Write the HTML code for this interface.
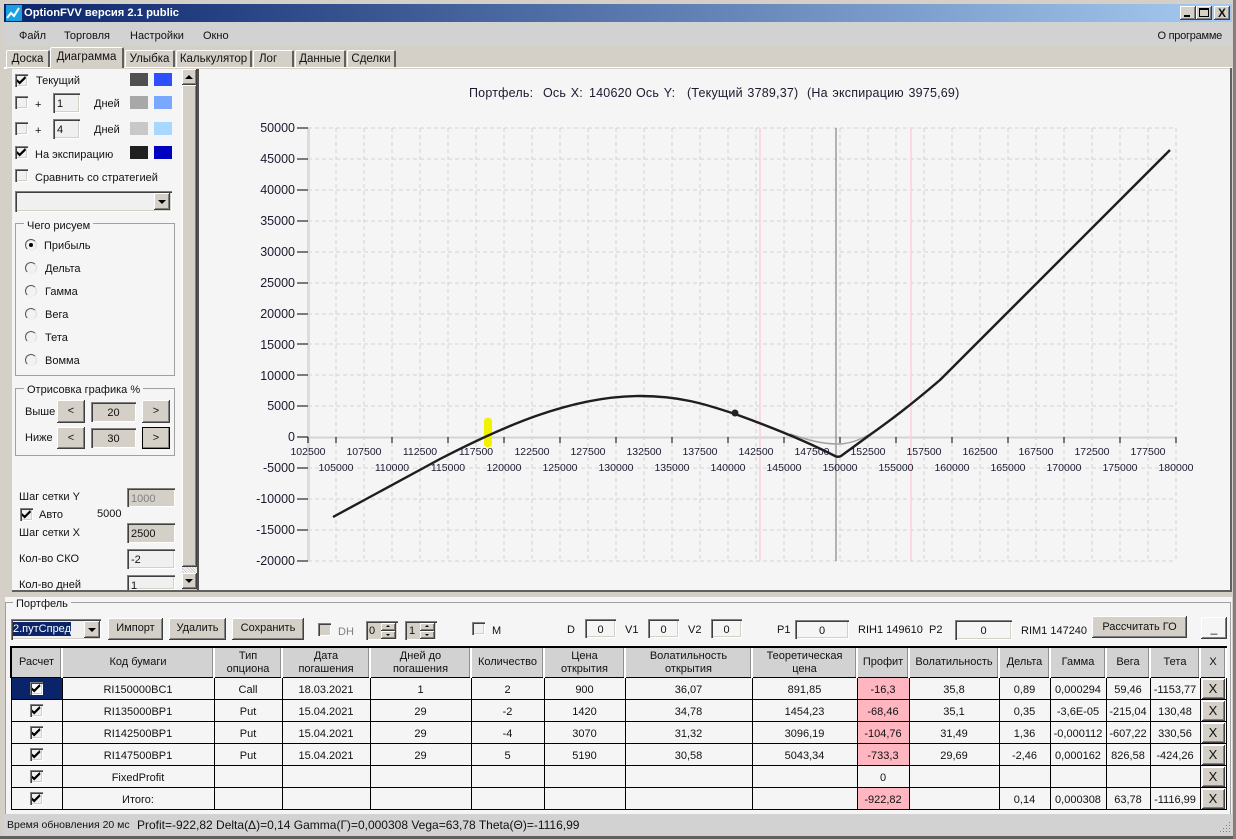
<!DOCTYPE html>
<html><head><meta charset="utf-8"><title>OptionFVV</title>
<style>
html,body{margin:0;padding:0;background:#d4d0c8;}
#w{position:relative;width:1236px;height:839px;overflow:hidden;background:#d4d0c8;font:11px/13px "Liberation Sans",sans-serif;color:#111;}
.a{position:absolute;white-space:nowrap;}
.b{position:absolute;box-sizing:border-box;}
.t{position:absolute;white-space:nowrap;line-height:14px;}
.up{position:absolute;box-sizing:border-box;background:#d4d0c8;box-shadow:inset -1px -1px 0 #404040,inset 1px 1px 0 #fff,inset -2px -2px 0 #808080;text-align:center;}
.in{position:absolute;box-sizing:border-box;background:#f0f0f0;box-shadow:inset 1px 1px 0 #808080,inset 2px 2px 0 #404040,inset -1px -1px 0 #fff,inset -2px -2px 0 #d4d0c8;padding:4px 4px 2px;line-height:14px;overflow:hidden;white-space:nowrap;}
.dis{background:#d4d0c8;}
.cb{position:absolute;box-sizing:border-box;width:13px;height:13px;background:#f0f0f0;box-shadow:inset 1px 1px 0 #808080,inset 2px 2px 0 #404040,inset -1px -1px 0 #fff,inset -2px -2px 0 #d4d0c8;}
.cb.c::after{content:"";position:absolute;left:2px;top:2px;width:9px;height:9px;background:#000;clip-path:polygon(0 35%,30% 60%,90% 0,100% 25%,30% 95%,0 65%);}
.rd{position:absolute;box-sizing:border-box;width:12px;height:12px;border-radius:50%;background:#f2f2f2;border:1px solid;border-color:#555 #ddd #eee #555;}
.rd.c::after{content:"";position:absolute;left:3px;top:3px;width:4px;height:4px;border-radius:50%;background:#000;}
.g{position:absolute;box-sizing:border-box;border:1px solid #a0a0a0;}
.tab{position:absolute;box-sizing:border-box;background:#d4d0c8;border-top:1px solid #fff;border-left:1px solid #fff;border-right:2px solid #606060;border-radius:2px 2px 0 0;text-align:center;line-height:17px;font-size:11.5px;}
.sw{position:absolute;width:18px;height:13px;}
.ar{position:absolute;width:0;height:0;border:4px solid transparent;border-top:4px solid #000;border-bottom:0;}
.aru{position:absolute;width:0;height:0;border:4px solid transparent;border-bottom:4px solid #000;border-top:0;}
table{position:absolute;left:10px;top:648px;width:1215px;border-collapse:collapse;table-layout:fixed;background:#f5f5f5;font:11px/13px "Liberation Sans",sans-serif;}
th{background:#d2d2d2;font-weight:normal;height:29px;padding:0;border-right:2px solid #fff;box-shadow:inset -1px 0 0 #909090;text-align:center;}
td{height:18px;padding:3px 0 0;border:1px solid #000;text-align:center;position:relative;}
.p{background:#ffb6c1;}
td .cb{left:18px;top:4px;}
.x{position:absolute;left:1px;top:1px;width:23px;height:20px;font-size:13px;line-height:19px;}
.ct{position:absolute;white-space:nowrap;top:86px;font-size:12.5px;line-height:14px;letter-spacing:.2px;word-spacing:1px;color:#1a1a30;}
</style></head><body><div id="w">

<!-- title -->
<div class="b" style="left:4px;top:4px;width:1228px;height:18px;background:linear-gradient(90deg,#0a246a,#a6caf0);"></div>
<div class="b" style="left:6px;top:5px;width:16px;height:16px;background:#1aa0e0;"></div>
<svg class="b" style="left:6px;top:5px" width="16" height="16"><path d="M1 13L5 8L8 11L13 3" fill="none" stroke="#fff" stroke-width="2"/></svg>
<div class="t" style="left:24px;top:6px;color:#fff;font:bold 11.2px/14px 'Liberation Sans',sans-serif;">OptionFVV версия 2.1 public</div>
<div class="up" style="left:1180px;top:6px;width:16px;height:14px;"><div class="b" style="left:4px;top:9px;width:6px;height:2px;background:#000"></div></div>
<div class="up" style="left:1196px;top:6px;width:16px;height:14px;"><div class="b" style="left:3px;top:2px;width:10px;height:9px;border:1px solid #000;border-top-width:2px"></div></div>
<div class="up" style="left:1214px;top:6px;width:16px;height:14px;font:bold 12px/14px 'Liberation Sans',sans-serif;">X</div>

<!-- menu -->
<div class="b" style="left:4px;top:22px;width:1228px;height:24px;background:#d2d2d2;"></div>
<div class="t" style="left:19px;top:29px">Файл</div>
<div class="t" style="left:64px;top:29px">Торговля</div>
<div class="t" style="left:130px;top:29px">Настройки</div>
<div class="t" style="left:203px;top:29px">Окно</div>
<div class="t" style="right:14px;top:29px;letter-spacing:-.25px">О программе</div>

<!-- tabs -->
<div class="tab" style="left:6px;top:50px;width:44px;height:17px;">Доска</div>
<div class="tab" style="left:50px;top:47px;width:74px;height:21px;line-height:19px;z-index:2">Диаграмма</div>
<div class="tab" style="left:125px;top:50px;width:50px;height:17px;">Улыбка</div>
<div class="tab" style="left:176px;top:50px;width:76px;height:17px;">Калькулятор</div>
<div class="tab" style="left:253px;top:50px;width:41px;height:17px;text-align:left;padding-left:5px">Лог</div>
<div class="tab" style="left:295px;top:50px;width:51px;height:17px;">Данные</div>
<div class="tab" style="left:347px;top:50px;width:49px;height:17px;">Сделки</div>

<!-- page body -->
<div class="b" style="left:4px;top:67px;width:1228px;height:2px;background:#fff"></div>
<div class="b" style="left:7px;top:68px;width:1224px;height:522px;background:#d4d0c8;"></div>
<div class="b" style="left:12px;top:69px;width:1218px;height:521px;background:#f5f5f5;"></div>
<div class="b" style="left:1230px;top:68px;width:2px;height:522px;background:#606060"></div>
<div class="b" style="left:12px;top:590px;width:1220px;height:2px;background:#606060"></div>

<!-- scrollbar -->
<div class="b" style="left:182px;top:69px;width:16px;height:521px;background:#d4d0c8;"></div>
<div class="b" style="left:197px;top:69px;width:2px;height:521px;background:#505050"></div>
<div class="up" style="left:182px;top:69px;width:15px;height:16px;"><div class="aru" style="left:3px;top:6px"></div></div>
<div class="up" style="left:182px;top:85px;width:15px;height:482px;"></div>
<div class="b" style="left:182px;top:567px;width:15px;height:6px;background:repeating-linear-gradient(45deg,#fff 0 1px,#c8c8c8 1px 2px);"></div>
<div class="up" style="left:182px;top:573px;width:15px;height:16px;"><div class="ar" style="left:3px;top:6px"></div></div>

<!-- left panel -->
<div class="cb c" style="left:15px;top:74px"></div><div class="t" style="left:36px;top:74px">Текущий</div>
<div class="sw" style="left:130px;top:73px;background:#505050"></div><div class="sw" style="left:154px;top:73px;background:#2c50ff"></div>
<div class="cb" style="left:15px;top:96px"></div><div class="t" style="left:35px;top:98px">+</div>
<div class="in" style="left:53px;top:93px;width:27px;height:20px;">1</div><div class="t" style="left:94px;top:97px">Дней</div>
<div class="sw" style="left:130px;top:96px;background:#a8a8a8"></div><div class="sw" style="left:154px;top:96px;background:#78a8ff"></div>
<div class="cb" style="left:15px;top:122px"></div><div class="t" style="left:35px;top:124px">+</div>
<div class="in" style="left:53px;top:119px;width:27px;height:20px;">4</div><div class="t" style="left:94px;top:123px">Дней</div>
<div class="sw" style="left:130px;top:122px;background:#c8c8c8"></div><div class="sw" style="left:154px;top:122px;background:#a8d8ff"></div>
<div class="cb c" style="left:15px;top:146px"></div><div class="t" style="left:35px;top:148px">На экспирацию</div>
<div class="sw" style="left:130px;top:146px;background:#202020"></div><div class="sw" style="left:154px;top:146px;background:#0000c0"></div>
<div class="cb" style="left:15px;top:169px"></div><div class="t" style="left:35px;top:171px">Сравнить со стратегией</div>
<div class="in" style="left:15px;top:191px;width:157px;height:21px;"></div>
<div class="up" style="left:154px;top:193px;width:16px;height:17px;"><div class="ar" style="left:4px;top:7px"></div></div>

<div class="g" style="left:15px;top:223px;width:160px;height:153px;"></div>
<div class="t" style="left:24px;top:219px;background:#f5f5f5;padding:0 3px">Чего рисуем</div>
<div class="rd c" style="left:25px;top:239px"></div><div class="t" style="left:44px;top:239px">Прибыль</div>
<div class="rd" style="left:25px;top:262px"></div><div class="t" style="left:45px;top:262px">Дельта</div>
<div class="rd" style="left:25px;top:285px"></div><div class="t" style="left:45px;top:285px">Гамма</div>
<div class="rd" style="left:25px;top:308px"></div><div class="t" style="left:45px;top:308px">Вега</div>
<div class="rd" style="left:25px;top:331px"></div><div class="t" style="left:45px;top:331px">Тета</div>
<div class="rd" style="left:25px;top:354px"></div><div class="t" style="left:45px;top:354px">Вомма</div>

<div class="g" style="left:15px;top:388px;width:160px;height:68px;"></div>
<div class="t" style="left:24px;top:383px;background:#f5f5f5;padding:0 3px">Отрисовка графика %</div>
<div class="t" style="left:25px;top:405px">Выше</div>
<div class="up" style="left:57px;top:400px;width:28px;height:23px;line-height:23px;">&lt;</div>
<div class="in dis" style="left:91px;top:402px;width:45px;height:20px;text-align:center;">20</div>
<div class="up" style="left:142px;top:400px;width:28px;height:23px;line-height:23px;">&gt;</div>
<div class="t" style="left:25px;top:431px">Ниже</div>
<div class="up" style="left:57px;top:427px;width:28px;height:22px;line-height:22px;">&lt;</div>
<div class="in dis" style="left:91px;top:428px;width:45px;height:20px;text-align:center;">30</div>
<div class="up" style="left:142px;top:427px;width:28px;height:22px;line-height:22px;outline:1px solid #000;outline-offset:-1px;">&gt;</div>

<div class="t" style="left:19px;top:490px">Шаг сетки Y</div>
<div class="in dis" style="left:127px;top:488px;width:48px;height:19px;color:#808080;">1000</div>
<div class="cb c" style="left:20px;top:508px"></div><div class="t" style="left:39px;top:508px">Авто</div>
<div class="t" style="left:97px;top:507px">5000</div>
<div class="t" style="left:19px;top:526px">Шаг сетки X</div>
<div class="in dis" style="left:127px;top:523px;width:48px;height:20px;">2500</div>
<div class="t" style="left:19px;top:552px">Кол-во СКО</div>
<div class="in" style="left:127px;top:549px;width:48px;height:20px;">-2</div>
<div class="t" style="left:19px;top:578px">Кол-во дней</div>
<div class="in" style="left:127px;top:575px;width:48px;height:15px;">1</div>

<!-- chart -->
<div class="ct" style="left:469px">Портфель:</div>
<div class="ct" style="left:543px">Ось X:</div>
<div class="ct" style="left:589px">140620</div>
<div class="ct" style="left:636px">Ось Y:</div>
<div class="ct" style="left:687px">(Текущий 3789,37)</div>
<div class="ct" style="left:807px">(На экспирацию 3975,69)</div>
<svg class="b" style="left:0;top:0" width="1236" height="600" font-family="'Liberation Sans',sans-serif">
<path d="M308 159H1176M308 190H1176M308 221H1176M308 252H1176M308 283H1176M308 314H1176M308 344H1176M308 375H1176M308 406H1176M308 468H1176M308 499H1176M308 530H1176M308 561H1176M308 128H1176M336 128V561M364 128V561M392 128V561M420 128V561M448 128V561M476 128V561M504 128V561M532 128V561M560 128V561M588 128V561M616 128V561M644 128V561M672 128V561M700 128V561M728 128V561M756 128V561M784 128V561M812 128V561M840 128V561M868 128V561M896 128V561M924 128V561M952 128V561M980 128V561M1008 128V561M1036 128V561M1064 128V561M1092 128V561M1120 128V561M1148 128V561M1176 128V561" stroke="#d4d4d4" stroke-dasharray="4 3" fill="none"/>
<path d="M308.500 128V561" stroke="#dcdcdc" stroke-width="3"/>
<path d="M308 437.500H1176" stroke="#d4d4d4" stroke-width="2"/>
<path d="M760 128V561M911 128V561" stroke="#ffd0d8" stroke-width="1.500"/>
<path d="M836 128V561" stroke="#707078" stroke-width="1"/>
<path d="M297 128H308M297 159H308M297 190H308M297 221H308M297 252H308M297 283H308M297 314H308M297 344H308M297 375H308M297 406H308M297 437H308M297 468H308M297 499H308M297 530H308M297 561H308" stroke="#000"/>
<path d="M308 437V443M336 437V443M392 437V443M448 437V443M504 437V443M560 437V443M616 437V443M672 437V443M728 437V443M784 437V443M840 437V443M896 437V443M952 437V443M1008 437V443M1064 437V443M1120 437V443M1176 437V443" stroke="#000"/>
<rect x="484" y="418" width="8" height="29" rx="3" fill="#f2f200"/>
<path d="M790 434C805 439 820 444 838 444C855 444 870 435 885 424" fill="none" stroke="#a0a0a0" stroke-width="1.500"/>
<path d="M333 517L440 459C500 428 570 396 640 396C680 396 705 404 735 414C760 423 800 438 835 456Q838 457.500 841 456L867 437C885 424 905 410 940 380L1170 150" fill="none" stroke="#1e1e1e" stroke-width="2.400" stroke-linejoin="round"/>
<circle cx="735" cy="413" r="3.500" fill="#222"/>
<g font-size="12.500" text-anchor="end" fill="#1a1a30">
<text x="295" y="132">50000</text><text x="295" y="163">45000</text><text x="295" y="194">40000</text><text x="295" y="225">35000</text><text x="295" y="256">30000</text><text x="295" y="287">25000</text><text x="295" y="318">20000</text><text x="295" y="349">15000</text><text x="295" y="380">10000</text><text x="295" y="410">5000</text><text x="295" y="441">0</text><text x="295" y="472">-5000</text><text x="295" y="503">-10000</text><text x="295" y="534">-15000</text><text x="295" y="565">-20000</text>
</g>
<g font-size="10.500" text-anchor="middle" fill="#1a1a30">
<text x="308" y="455">102500</text><text x="364" y="455">107500</text><text x="420" y="455">112500</text><text x="476" y="455">117500</text><text x="532" y="455">122500</text><text x="588" y="455">127500</text><text x="644" y="455">132500</text><text x="700" y="455">137500</text><text x="756" y="455">142500</text><text x="812" y="455">147500</text><text x="868" y="455">152500</text><text x="924" y="455">157500</text><text x="980" y="455">162500</text><text x="1036" y="455">167500</text><text x="1092" y="455">172500</text><text x="1148" y="455">177500</text>
<text x="336" y="471">105000</text><text x="392" y="471">110000</text><text x="448" y="471">115000</text><text x="504" y="471">120000</text><text x="560" y="471">125000</text><text x="616" y="471">130000</text><text x="672" y="471">135000</text><text x="728" y="471">140000</text><text x="784" y="471">145000</text><text x="840" y="471">150000</text><text x="896" y="471">155000</text><text x="952" y="471">160000</text><text x="1008" y="471">165000</text><text x="1064" y="471">170000</text><text x="1120" y="471">175000</text><text x="1176" y="471">180000</text>
</g>
</svg>

<!-- portfolio group -->
<div class="b" style="left:4px;top:597px;width:1228px;height:217px;background:#f5f5f5;"></div>
<div class="b" style="left:4px;top:597px;width:1px;height:217px;background:#d4d0c8"></div>
<div class="g" style="left:5px;top:602px;width:1226px;height:212px;border-bottom:0"></div>
<div class="t" style="left:13px;top:597px;background:#f5f5f5;padding:0 3px">Портфель</div>

<div class="in" style="left:11px;top:619px;width:90px;height:21px;padding:0"></div>
<div class="a" style="left:13px;top:622px;background:#0a246a;color:#fff;line-height:14px;">2.путСпред</div>
<div class="up" style="left:84px;top:621px;width:16px;height:17px;"><div class="ar" style="left:4px;top:7px"></div></div>
<div class="up" style="left:108px;top:618px;width:55px;height:22px;line-height:21px;">Импорт</div>
<div class="up" style="left:169px;top:618px;width:57px;height:22px;line-height:21px;">Удалить</div>
<div class="up" style="left:232px;top:618px;width:72px;height:22px;line-height:21px;">Сохранить</div>
<div class="cb" style="left:318px;top:623px;background:#d4d0c8"></div><div class="t" style="left:338px;top:625px;color:#808080">DH</div>
<div class="in dis" style="left:366px;top:621px;width:32px;height:19px;padding:3px 3px">0</div>
<div class="up" style="left:381px;top:623px;width:15px;height:8px"><div class="aru" style="left:5px;top:2px;border-width:2px;border-top:0"></div></div>
<div class="up" style="left:381px;top:631px;width:15px;height:8px"><div class="ar" style="left:5px;top:3px;border-width:2px;border-bottom:0"></div></div>
<div class="in dis" style="left:405px;top:621px;width:32px;height:19px;padding:3px 4px">1</div>
<div class="up" style="left:420px;top:623px;width:15px;height:8px"><div class="aru" style="left:5px;top:2px;border-width:2px;border-top:0"></div></div>
<div class="up" style="left:420px;top:631px;width:15px;height:8px"><div class="ar" style="left:5px;top:3px;border-width:2px;border-bottom:0"></div></div>
<div class="cb" style="left:472px;top:622px"></div><div class="t" style="left:492px;top:624px">M</div>
<div class="t" style="left:567px;top:623px">D</div><div class="in" style="left:585px;top:619px;width:31px;height:19px;text-align:center;background:#f5f5f5">0</div>
<div class="t" style="left:625px;top:623px">V1</div><div class="in" style="left:648px;top:619px;width:31px;height:19px;text-align:center;background:#f5f5f5">0</div>
<div class="t" style="left:688px;top:623px">V2</div><div class="in" style="left:711px;top:619px;width:31px;height:19px;text-align:center;background:#f5f5f5">0</div>
<div class="t" style="left:777px;top:623px">P1</div><div class="in" style="left:795px;top:620px;width:54px;height:19px;text-align:center;background:#f5f5f5">0</div>
<div class="t" style="left:858px;top:623px">RIH1 149610</div>
<div class="t" style="left:929px;top:623px">P2</div><div class="in" style="left:955px;top:620px;width:57px;height:20px;text-align:center;background:#f5f5f5">0</div>
<div class="t" style="left:1021px;top:624px">RIM1 147240</div>
<div class="up" style="left:1092px;top:616px;width:95px;height:22px;line-height:22px;">Рассчитать ГО</div>
<div class="up" style="left:1201px;top:617px;width:26px;height:22px;line-height:22px;font-size:12px;background:#f5f5f5">_</div>

<!-- table -->
<div class="b" style="left:10px;top:646px;width:1217px;height:164px;border:2px solid #000;border-bottom:0;"></div>
<table>
<colgroup><col style="width:51px"><col style="width:152px"><col style="width:68px"><col style="width:88px"><col style="width:101px"><col style="width:73px"><col style="width:81px"><col style="width:127px"><col style="width:105px"><col style="width:52px"><col style="width:90px"><col style="width:51px"><col style="width:56px"><col style="width:44px"><col style="width:50px"><col style="width:26px"></colgroup>
<tr><th style="border-left:2px solid #000">Расчет</th><th>Код бумаги</th><th>Тип<br>опциона</th><th>Дата<br>погашения</th><th>Дней до<br>погашения</th><th>Количество</th><th>Цена<br>открытия</th><th>Волатильность<br>открытия</th><th>Теоретическая<br>цена</th><th>Профит</th><th>Волатильность</th><th>Дельта</th><th>Гамма</th><th>Вега</th><th>Тета</th><th>X</th></tr>
<tr><td style="background:#0a246a"><span class="cb c" style="background:#fff"></span></td><td>RI150000BC1</td><td>Call</td><td>18.03.2021</td><td>1</td><td>2</td><td>900</td><td>36,07</td><td>891,85</td><td class="p">-16,3</td><td>35,8</td><td>0,89</td><td>0,000294</td><td>59,46</td><td>-1153,77</td><td><span class="up x">X</span></td></tr>
<tr><td><span class="cb c"></span></td><td>RI135000BP1</td><td>Put</td><td>15.04.2021</td><td>29</td><td>-2</td><td>1420</td><td>34,78</td><td>1454,23</td><td class="p">-68,46</td><td>35,1</td><td>0,35</td><td>-3,6E-05</td><td>-215,04</td><td>130,48</td><td><span class="up x">X</span></td></tr>
<tr><td><span class="cb c"></span></td><td>RI142500BP1</td><td>Put</td><td>15.04.2021</td><td>29</td><td>-4</td><td>3070</td><td>31,32</td><td>3096,19</td><td class="p">-104,76</td><td>31,49</td><td>1,36</td><td>-0,000112</td><td>-607,22</td><td>330,56</td><td><span class="up x">X</span></td></tr>
<tr><td><span class="cb c"></span></td><td>RI147500BP1</td><td>Put</td><td>15.04.2021</td><td>29</td><td>5</td><td>5190</td><td>30,58</td><td>5043,34</td><td class="p">-733,3</td><td>29,69</td><td>-2,46</td><td>0,000162</td><td>826,58</td><td>-424,26</td><td><span class="up x">X</span></td></tr>
<tr><td><span class="cb c"></span></td><td>FixedProfit</td><td></td><td></td><td></td><td></td><td></td><td></td><td></td><td>0</td><td></td><td></td><td></td><td></td><td></td><td><span class="up x">X</span></td></tr>
<tr><td><span class="cb c"></span></td><td>Итого:</td><td></td><td></td><td></td><td></td><td></td><td></td><td></td><td class="p">-922,82</td><td></td><td>0,14</td><td>0,000308</td><td>63,78</td><td>-1116,99</td><td><span class="up x">X</span></td></tr>
</table>

<!-- status -->
<div class="b" style="left:4px;top:814px;width:1228px;height:21px;background:#d2d2d2;"></div>
<div class="b" style="left:0;top:836px;width:1236px;height:3px;background:#606060"></div>
<div class="b" style="left:1233px;top:0;width:3px;height:839px;background:#808080"></div>
<div class="t" style="left:7px;top:818px;font-size:10.5px">Время обновления 20 мс</div>
<div class="t" style="left:137px;top:818px;font-size:12px">Profit=-922,82 Delta(Δ)=0,14 Gamma(Г)=0,000308 Vega=63,78 Theta(Θ)=-1116,99</div>
<svg class="b" style="left:1218px;top:820px" width="13" height="13"><path d="M11 2h1v1h-1zM8 5h1v1H8zM11 5h1v1h-1zM5 8h1v1H5zM8 8h1v1H8zM11 8h1v1h-1zM2 11h1v1H2zM5 11h1v1H5zM8 11h1v1H8zM11 11h1v1h-1z" fill="#808080"/></svg>
</div></body></html>
